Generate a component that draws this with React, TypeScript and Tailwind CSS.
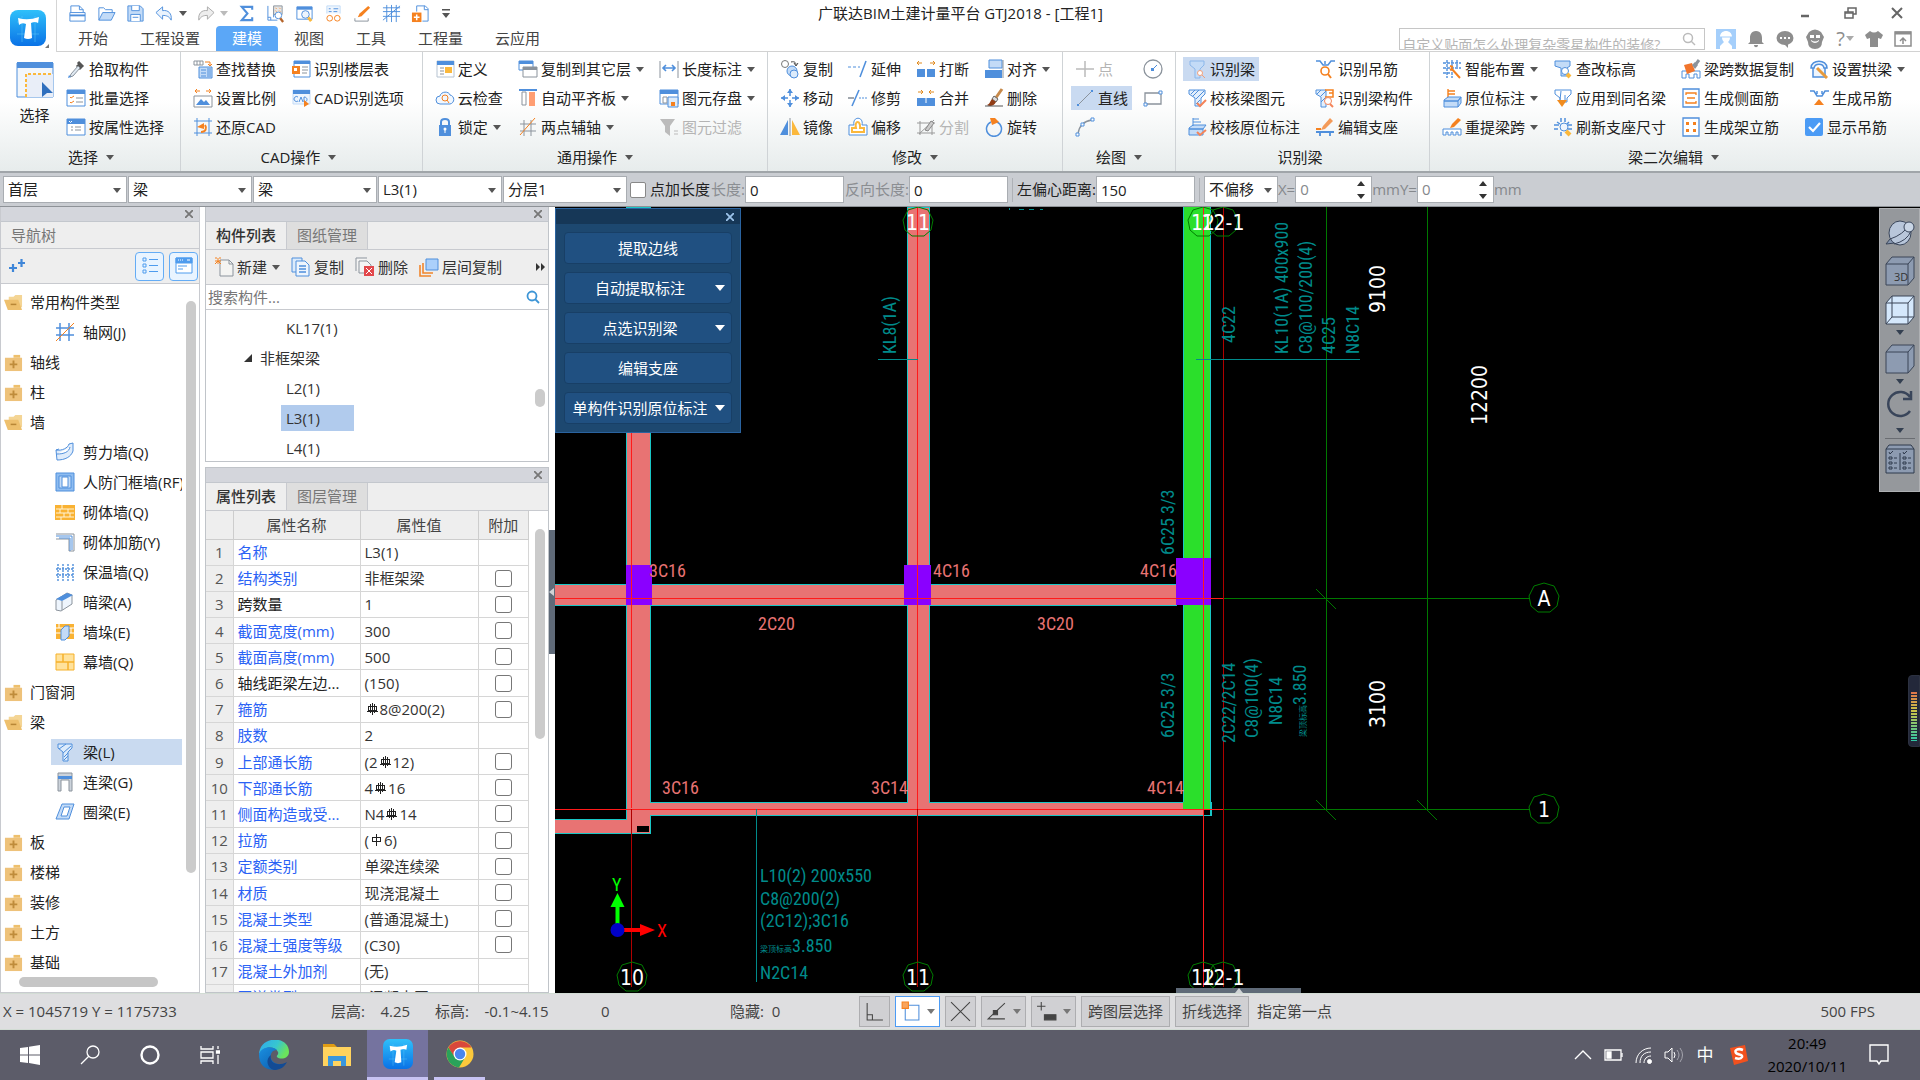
import type { ReactNode } from "react";

const B = "#4f8fdc";
const L = "#c3dbf7";
const O = "#f5811f";
const G = "#8b939c";
const Y = "#fbb83c";

const icons: Record<string, ReactNode> = {
  newFile: <><path d="M3 9V2h9l4 4v3M12 2v4h4" stroke={B} /><path d="M2 9h16v9H2z" fill="#fff" stroke={B} /><path d="M2 12h16" stroke={B} strokeWidth="2" /></>,
  open: <><path d="M2 17V4h5l2 2h7v3" stroke={B} /><path d="M2 17 6 9h13l-4 8z" fill={L} stroke={B} /></>,
  save: <><path d="M2 2h13l3 3v13H2z" fill={L} stroke={B} /><path d="M6 2v5h8V2M5 18v-7h10v7M7 14h6" fill="#fff" stroke={B} /></>,
  undo: <path d="M1 9 8 3v4c6-1 10 3 9 10-2-4-5-5-9-5v4z" fill="#eaf3fd" stroke={B} />,
  redo: <path d="M19 9 12 3v4C6 6 2 10 3 17c2-4 5-5 9-5v4z" fill="#eee" stroke="#aaa" />,
  sum: <path d="M16 6V3H5l6 7-6 7h11v-3" stroke={B} strokeWidth="2.2" />,
  report: <><path d="M2 2v15h10M2 14h3v3M8 14V5M12 12V3" stroke={B} /><path d="M8 2h9v9H8z" fill="#e6e6e6" stroke={G} /><path d="m10 4 1 1m3-1 1 1m-5 2 1 1m3-1 1 1" stroke={O} /><circle cx="13" cy="12" r="3.5" fill="#fff" stroke={B} /><path d="m15 15 3 4" stroke="#b5652b" strokeWidth="2.4" /></>,
  viewSearch: <><path d="M2 3h16v13H2z" fill="#fff" stroke={B} /><path d="M2 3h16v3H2z" fill={B} /><circle cx="11" cy="11" r="4" fill="#eef5fd" stroke={B} /><path d="m14 14 3 4" stroke={Y} strokeWidth="3" /></>,
  glasses: <><path d="M3 10V2h14v8" fill="#eef5fd" stroke={L} /><path d="M5 5h2m3 0h5M5 8h3m2 0h4" stroke={B} /><circle cx="6" cy="15" r="3" stroke={O} /><circle cx="14" cy="15" r="3" stroke={O} /></>,
  pencil: <><path d="m16 2 2 2-9 9-4 1 2-4z" fill={O} /><path d="M2 15v3h14v-3" stroke={G} /></>,
  grid: <path d="M1 4h18M1 8h18M1 13h18M5 1v18M10 1v18M15 1v18M1 17 19 2" stroke={B} />,
  addPage: <><path d="M6 8V2h9l3 3v13h-6M14 2v4h4" stroke={B} /><path d="M1 9h10v10H1z" fill={O} /><path d="M3 14h6M6 11v6" stroke="#fff" strokeWidth="1.6" /></>,
  dropper: <><path d="m12 3 5 5M11 6l4 4" stroke="#555" strokeWidth="3" /><path d="m12 7-7 8-1 3 3-1 7-8z" fill="#dfe9f2" stroke={G} /><path d="m3 16 2 2-3 1z" fill={B} /></>,
  batch: <><path d="M1 2h18v16H1z" fill="#fff" stroke={B} /><path d="M1 2h18v4H1z" fill={B} /><path d="m4 9 1 1 3-2m-4 6 1 1 3-2" stroke={O} /><path d="M10 10h7m-7 4h7" stroke={G} /></>,
  byAttr: <><path d="M1 2h18v16H1z" fill="#fff" stroke={B} /><path d="M1 2h18v5H1z" fill={B} /><path d="m3 4 1.500 1.500L6 4" stroke="#fff" /><path d="M5 10h2m2 0h6M5 13h2m2 0h6" stroke={G} /></>,
  replace: <><path d="M1 2h9v4H1zM4 2v4M7 2v4" stroke={G} /><path d="M12 3h5v4m-2-2 2 2 2-2" stroke={O} /><path d="M6 8h13v11H6z" fill={L} stroke={B} /><path d="M8 11h5m-5 3h5m-5 3h5M15 9v9M17 9v9" stroke={B} /></>,
  scale: <><path d="M2 3h5M4 1 2 3l2 2M18 3h-5m3-2 2 2-2 2" stroke={O} /><path d="M1 8h18v11H1z" fill="#fff" stroke={G} /><path d="m3 17 5-6 3 3 2-2 4 5z" fill={B} /></>,
  restore: <><path d="M4 1v18M16 1v18M1 4h18M1 16h18" stroke={B} /><path d="M8 15c5 0 6-4 4-7" stroke={O} strokeWidth="2" /><path d="M4 10l7-4 0 6z" fill={O} /></>,
  floorTable: <><path d="M3 2h16v16H3z" fill="#fff" stroke={B} /><path d="M3 2h16v3H3z" fill={B} /><path d="M1 7h8v8H1z" fill={O} /><path d="M3 9h3v3H3z" fill="#fff" /><path d="M11 8h6m-6 3h6m-6 3h5" stroke={G} /></>,
  cadOpt: <><path d="M2 2h17v14H2z" fill="#eef5fd" stroke={L} /><path d="M2 2h17v4H2z" fill={B} /><path d="M7 9a2.500 2.500 0 1 0 0 4M8 14l2-5 2 5M13 9v5c4 0 4-5 0-5" stroke={B} /><path d="m13 12 5 4-5 3z" fill={O} /></>,
  define: <><path d="M2 2h17v16H2z" fill="#fff" stroke="#b6c3d1" /><path d="M2 2h17v4H2z" fill={B} /><path d="M5 9h4m-4 3h4m-4 3h4" stroke={G} /><path d="M10 8h7v6h-7z" fill={Y} /></>,
  cloud: <><path d="M5 16a4 4 0 0 1 0-8c1-5 9-5 10-1 5 1 5 8 0 9z" fill="#f1f7fe" stroke={B} /><circle cx="10" cy="10" r="3" stroke={O} /><path d="m12 12 2 3" stroke={O} /></>,
  lock: <><path d="M6 9V5c0-4 8-4 8 0v4" stroke={B} strokeWidth="2" /><path d="M4 8h12v11H4z" fill={B} /><circle cx="10" cy="12" r="1.500" fill="#fff" /><path d="M10 12v4" stroke="#fff" /></>,
  copyFloor: <><path d="M1 2h14v9H1z" fill="#fff" stroke={B} /><path d="M1 2h14v3H1z" fill={B} /><path d="M5 8h14v10H5z" fill="#fff" stroke={G} /><path d="M5 8h14v3H5z" fill={G} /></>,
  align: <><path d="M1 2h18" stroke={B} strokeWidth="2" /><path d="M4 4h4v13H4z" fill="#fff" stroke={G} /><path d="M11 4h6v14h-6z" fill="#ff9e73" /></>,
  axis2: <><path d="M2 7h16M2 14h16M6 3v16M13 3v16" stroke={G} /><path d="M2 18 17 1" stroke={O} /></>,
  dim: <><path d="M1 2v17M19 2v17" stroke={G} /><path d="M4 9h12M7 6 4 9l3 3M13 6l3 3-3 3" stroke={B} strokeWidth="1.600" /></>,
  saveEl: <><path d="M1 2h18v14H1z" fill="#fff" stroke={B} /><path d="M1 2h18v4H1z" fill={B} /><path d="M4 9h4v6H4z" stroke={G} /><path d="M9 9h10v10H9z" fill="#dcebfb" stroke={B} /><path d="M12 14h4v4h-4z" fill={O} /></>,
  filter: <><path d="M1 2h15l-5 7v10l-5-4V9z" fill="#bbb" /><path d="M15 14h4m-4 3h4" stroke="#bbb" /></>,
  copy: <><circle cx="5" cy="5" r="3.500" stroke="#777" /><path d="M11 3c4-1 5 1 5 3m-2-2 2 3 2-3" stroke="#444" /><circle cx="12" cy="12" r="5" fill={L} stroke={B} /><circle cx="14" cy="15" r="4" fill="#dcebfb" stroke={B} /></>,
  move: <><path d="M10 1v18M1 10h18" stroke={B} strokeWidth="1.500" /><path d="m7 5 3-4 3 4zM7 15l3 4 3-4zM5 7l-4 3 4 3zM15 7l4 3-4 3z" fill={B} /><path d="M8 8h4v4H8z" fill="#fff" /></>,
  mirror: <><path d="M8 3v15H0z" fill={B} /><path d="M12 3v15h8z" fill={Y} /><path d="M10 1v18" stroke={G} /></>,
  extend: <><path d="M0 8h3m2 0h3m2 0h2" stroke={B} /><path d="m18 2-6 16" stroke={B} strokeWidth="1.600" /></>,
  trim: <><path d="M0 10h6" stroke={G} strokeWidth="1.600" /><path d="M11 2 4 18" stroke={B} strokeWidth="1.600" /><path d="M11 10h2m1 0h2m1 0h2" stroke={B} /></>,
  offset: <><path d="M6 8c-2-9 10-9 8 0h5v10H1V8z" fill="#fff" stroke={B} /><path d="M8 11c-2-8 5-8 4 0h4v4H4v-4z" fill="#fff" stroke={Y} strokeWidth="2" /></>,
  breakIt: <><path d="M1 10h8v8H1zM11 10h8v8h-8z" fill={B} /><path d="M1 4h5M3 2 1 4l2 2M19 4h-5m3-2 2 2-2 2" stroke="#e08a1e" /></>,
  merge: <><path d="M1 10h18v8H1z" fill={B} /><path d="M10 10v5" stroke="#fff" /><path d="M2 4h5M5 2l2 2-2 2M18 4h-5m2-2-2 2 2 2" stroke="#e08a1e" /></>,
  split: <><path d="M1 6h18M1 16h18M4 4v14M16 4v14M3 17 18 3" stroke="#999" /><path d="m9 13 6-9 3 2-6 8z" fill="#ccc" stroke="#888" /></>,
  justify: <><path d="M5 1h13v8H5z" fill={L} stroke={B} /><path d="M1 11h17v8H1z" fill={B} /><path d="M19 1v18" stroke={G} /></>,
  erase: <><path d="m18 1-7 10" stroke="#c78a4b" strokeWidth="3" /><path d="m10 8 4 3-2 3-4-3z" fill="#ddd" stroke="#666" /><path d="m8 11 4 3c-2 4-6 5-9 3 3-1 3-4 5-6z" fill="#913d16" /><path d="M1 18h18" stroke="#555" /></>,
  rotate: <><path d="M7 5a7.500 7.500 0 1 0 6 0" stroke={B} strokeWidth="1.500" /><path d="M6 1h5l4 4-7 3z" fill={O} /></>,
  point: <path d="M1 10h18M10 2v16" stroke="#bbb" strokeWidth="1.500" />,
  circle: <><circle cx="10" cy="10" r="9" stroke={G} strokeWidth="1.300" /><path d="m10 10 4-4" stroke={B} /><path d="M8 9h3v3H8z" fill={B} /></>,
  line: <><path d="M3 17 17 3" stroke={G} /><path d="M2 16h2v2H2zM16 2h2v2h-2z" fill={B} /></>,
  rect: <><path d="M2 5h16v11H2z" stroke={G} strokeWidth="1.300" /><path d="M16 3h3v3h-3zM1 15h3v3H1z" fill="#fff" stroke={B} /></>,
  arc: <><path d="M3 17C4 9 9 4 17 3" stroke={G} strokeWidth="1.300" /><path d="M1 16h3v3H1zM16 1h3v3h-3zM6 6h3v3H6z" fill="#fff" stroke={B} /></>,
  beamR: <><path d="M3 2h14v4l-4 4v9H8v-9L3 6z" fill={L} stroke="#8bb7ea" /><circle cx="13" cy="14" r="2.500" fill="#fff" stroke="#f3a07a" /><path d="m15 16 3 3" stroke="#f3a07a" /></>,
  beamCheck: <><path d="M2 2h16v4l-4 4v8H8v-8L2 6z" fill="#e3effc" stroke={B} /><path d="m4 6 4-4m-2 6 6-6m-3 9 8-8m-8 13 4-4" stroke={B} /><path d="m10 15 3 3 6-6" stroke="#f4845a" strokeWidth="2" /></>,
  markCheck: <><path d="M6 1v8M6 2h6M6 5h8M2 11l4-3h13l-3 4H2zM2 12h14v6H2z" fill={L} stroke={B} /><path d="m10 15 3 3 6-5" stroke="#f4845a" strokeWidth="2" /></>,
  hangR: <><path d="M1 2h4l3 4h5l3-4h4M10 2v3" stroke={B} strokeWidth="1.500" /><circle cx="10" cy="12" r="4" stroke={O} strokeWidth="1.600" /><path d="m13 15 3 4" stroke={O} strokeWidth="2" /></>,
  beamComp: <><path d="M1 2h10v17H6V9L1 6z" fill="#e3effc" stroke={B} /><path d="m2 6 4-4m0 6 5-5m-5 11 4-4" stroke={B} /><path d="M10 2h8v7h-8M18 5h-4" stroke={O} strokeWidth="1.500" /><circle cx="13" cy="13" r="3.500" fill="#fff" stroke="#f4845a" /><path d="m15 16 3 3" stroke="#f4845a" strokeWidth="2" /></>,
  editSeat: <><path d="m15 1 3 3-8 8-4 1 2-4z" fill="#f39a58" /><path d="M1 12h5" stroke={O} strokeWidth="2" /><path d="M1 15h18M5 15v4M15 15v4" stroke={B} strokeWidth="1.800" /></>,
  smart: <><path d="M1 4h18M1 9h18M1 14h8M5 1v18M10 1v18M15 1v8" stroke={B} strokeWidth="1.400" strokeDasharray="3 1" /><path d="m9 9 9 10M8 7l3 1m-3 3 2-1" stroke={O} strokeWidth="2" /></>,
  mark: <><path d="M6 1v9M6 3h7M6 6h7" stroke={O} strokeWidth="1.400" /><path d="M2 12l4-3h13l-3 4H2zM2 13h14v6H2zM16 13l3-4v6l-3 4" fill={L} stroke={B} /></>,
  respan: <><path d="m16 1 3 2-7 7-4 1 2-4z" fill={O} /><path d="M1 12h18v6h-3v-3h-2v3h-3v-3H9v3H6v-3H4v3H1z" fill="#fff" stroke={B} /></>,
  level: <><path d="M2 2h15v5l-3 2v8H8V9L2 7z" fill={L} stroke={B} /><circle cx="12" cy="12" r="3.500" fill="#fff" stroke={B} /><path d="m14 15 3 3" stroke={Y} strokeWidth="4" /></>,
  apply: <><path d="M2 2h16v4l-4 4v4H7v-4L2 6z" fill="#fff" stroke={B} /><path d="m8 3-1 9M12 7v5" stroke={B} /><path d="M4 12h10l-5 7z" fill="#f08b1e" /></>,
  refreshSeat: <><path d="M8 1v4M12 1v4M1 8h5M1 12h4M15 8h4M15 12h4M8 19v-4M4 5l3 2M16 5l-2 2" stroke={B} strokeWidth="1.500" /><circle cx="11" cy="10" r="4" fill="#eef5fd" stroke={B} /><path d="m13 14 4 4" stroke={Y} strokeWidth="4" /></>,
  dataCopy: <><path d="M1 12h18v7h-3v-4h-3v4H8v-4H5v4H1z" fill="#fff" stroke={B} /><path d="m3 6 8-2 3 8-8 3z" fill="#f1752c" /><path d="m11 6 3-3 3 3-3 4z" fill={G} /><path d="m15 5 3-4" stroke={G} strokeWidth="3" /></>,
  sideBar: <><path d="M2 1h16v18H2z" fill="#fff" stroke={B} strokeWidth="1.300" /><path d="M5 7V5h10v2M5 13v2h10v-2M6 10h8" stroke={O} strokeWidth="1.300" /></>,
  standBar: <><path d="M2 1h16v18H2z" fill="#fff" stroke={B} strokeWidth="1.300" /><path d="M5 5h3v3H5zM12 5h3v3h-3zM5 12h3v3H5zM12 12h3v3h-3z" fill={O} /></>,
  arch: <><path d="M2 9c0-9 16-9 16 0h-3c-1-5-9-5-10 0zM4 9v9h12V9" fill="#eef5fd" stroke={B} strokeWidth="1.500" /><path d="m8 9 8 8 2 2" stroke="#e79a3c" strokeWidth="3" /></>,
  hangG: <><path d="M1 3h4l3 5h5l3-5h4M8 3v3M13 3v3" stroke={B} strokeWidth="1.500" /><path d="m10 11 5 6H5z" fill={O} /></>,
  axisNet: <><path d="M1 6h18M1 13h18M5 1v18M14 1v18" stroke={B} strokeWidth="1.500" /><path d="M1 19 19 1" stroke={O} /></>,
  shear: <path d="M1 8c6 1 12-2 13-6l4-1v8c-2 6-8 9-16 9zM1 8l3-1M2 12c7 0 12-2 13-7" fill="#dfecfb" stroke={B} />,
  frame: <><path d="M1 1h18v18H1z" fill="#8ebcf0" stroke={B} /><path d="M4 4h12v12H4z" fill={L} stroke={B} /><path d="M7 5h6v10H7z" fill="#fff" stroke={B} /></>,
  brick: <><path d="M0 3h20v15H0z" fill="#f9b233" /><path d="M1 7h18M1 11h18M1 15h18M7 3v4M13 7v4M5 7v4M9 11v4M15 11v4M6 15v3" stroke="#fff3d6" /></>,
  rebar: <><path d="M1 2h18v17h-5V7H1" stroke={G} /><path d="M1 4h16v14M4 6h11v13" stroke={B} /></>,
  insul: <path d="M3 2v17M8 2v17M13 2v17M18 2v17M1 7h18M1 13h18" stroke={B} strokeDasharray="2 1" strokeWidth="1.400" />,
  hidden: <><path d="M1 8v10l5 1 11-7V3L12 1z" fill="#eef5fd" stroke={G} /><path d="M1 7 12 1l6 2-11 6z" fill={B} /><path d="M7 9v9" stroke={G} /></>,
  pier: <><path d="M1 2h18v15H1z" fill="#f9b233" /><path d="M1 6h18M1 11h18M4 2v4M16 6v5" stroke="#fff" /><path d="m6 8 4-4h4v10l-4 4H6z" fill={L} stroke={B} /></>,
  curtain: <><path d="M1 2h18v16H1z" fill="#ffe29c" stroke="#f6b12b" /><path d="M1 10h18M8 2v8M13 10v8" stroke="#f6b12b" strokeWidth="1.500" /></>,
  beam: <><path d="M3 2h14v4l-4 4v9H8v-9L3 6z" fill="#dcebfb" stroke={B} /><path d="m4 7 7-5m-3 9 8-7m-7 11 4-4m-4 7 4-4" stroke={B} /></>,
  link: <><path d="M3 1h14v18h-3V8H6v11H3z" fill="#ccd3db" stroke={G} /><path d="M3 4h14v3H3z" fill={B} /></>,
  ring: <path d="M7 2h12l-5 15H1zM9 5 6 14h6l3-9z" fill={L} stroke={B} />,
  folderOpen: <><path d="M5 4h5l2-2h7v13H5z" fill="#f4d595" /><path d="M0 7h15l4 11H4z" fill="#eec06d" /><path d="M7 12h6" stroke="#b98736" strokeWidth="1.600" /></>,
  folder: <><path d="M10 2h7v3h-7z" fill="#eec06d" /><path d="M1 5h18v14H1z" fill="#eec27a" /><path d="M6 12h8M10 8v8" stroke="#bf8c3b" strokeWidth="2" /></>,
  create: <><path d="M6 3h9l4 4v12H6z" fill="#f4f4f2" stroke={G} /><path d="M15 3v4h4" stroke={G} /><path d="M1 1h2m2 0h2M4 4l3 3M1 7l3-3M4 1v6M1 4h6" stroke={O} /></>,
  copyDoc: <><path d="M1 1h10v14H1z" fill="#dcebfb" stroke={B} /><path d="M5 4h9l4 4v11H5z" fill="#eef5fd" stroke={B} /><path d="M8 9h7M8 12h7M8 15h7" stroke={B} strokeWidth="1.500" /></>,
  delDoc: <><path d="M1 14V1h11M4 4h8l4 4v8H4z" fill="#f4f4f4" stroke={G} /><path d="M9 9h10v10H9z" fill="#e2474b" /><path d="m11 11 6 6m0-6-6 6" stroke="#fff" /></>,
  layerCopy: <><path d="M1 8v11h11M4 6v10h10" stroke="#f0862d" strokeWidth="1.600" /><path d="M7 2h12v11H7z" fill="#abd0fb" stroke={B} /></>,
};

const Icon = ({ name, className = "size-5" }: { name: string; className?: string }) => (
  <svg viewBox="0 0 20 20" className={`${className} shrink-0`} fill="none" aria-hidden="true">{icons[name]}</svg>
);

const Caret = ({ className = "text-[#555]" }: { className?: string }) => (
  <svg viewBox="0 0 8 5" className={`w-2 h-[5px] shrink-0 ${className}`} aria-hidden="true"><path d="M0 0h8L4 5z" fill="currentColor" /></svg>
);

type Tool = { icon: string; text?: string; arrow?: boolean; on?: boolean; off?: boolean };

function ToolButton({ icon, text, arrow, on, off }: Tool) {
  return (
    <button
      disabled={off}
      aria-label={text ?? icon}
      className={`flex h-6 items-center gap-[3px] px-1 whitespace-nowrap ${on ? "bg-[#c9daf1]" : ""} ${off ? "text-[#b4b4b4]" : ""}`}
    >
      <Icon name={icon} />
      {text}
      {arrow && <Caret className="ml-0.5 text-[#555]" />}
    </button>
  );
}

function Group({ label, cols, arrow = true, lead, className = "px-2" }: {
  label: string; cols: Tool[][]; arrow?: boolean; lead?: ReactNode; className?: string;
}) {
  return (
    <section className={`flex flex-col border-r border-[#cfd3d6] ${className}`}>
      <div className="flex gap-[7px] pt-[5px]">
        {lead}
        {cols.map((col, i) => (
          <div key={i} className="flex flex-col items-start gap-[5px]">
            {col.map((t) => <ToolButton key={t.icon} {...t} />)}
          </div>
        ))}
      </div>
      <div className="flex flex-1 items-center justify-center gap-2 pt-1">
        {label}
        {arrow && <Caret />}
      </div>
    </section>
  );
}

function Combo({ label, value, className = "w-[124px]" }: { label: string; value: string; className?: string }) {
  return (
    <div className={`relative ${className}`}>
      <select aria-label={label} className="h-[27px] w-full appearance-none border border-[#a9adb2] bg-white px-1 text-[15px] outline-none">
        <option>{value}</option>
      </select>
      <Caret className="pointer-events-none absolute top-3 right-1.5 text-[#555]" />
    </div>
  );
}

const quick = ["newFile", "open", "save", "undo", "redo", "sum", "report", "viewSearch", "glasses", "pencil", "grid", "addPage"];
const menus = ["开始", "工程设置", "建模", "视图", "工具", "工程量", "云应用"];

function Logo({ className }: { className: string }) {
  return (
    <svg viewBox="0 0 36 36" className={className} aria-hidden="true">
      <defs><linearGradient id="lg" x2="0" y2="1"><stop stopColor="#2fc0fa" /><stop offset="1" stopColor="#0a72e6" /></linearGradient></defs>
      <rect width="36" height="36" rx="8" fill="url(#lg)" />
      <path d="M7 24h22M7 12h22M12 6v26M25 6v26" stroke="#5cc8fb" strokeWidth=".5" />
      <path d="M8 8q10 3 21-1l-1 6q-3-2-7 0l1 15q-4 2-8 0l2-14q-4-2-7 1z" fill="#fff" />
    </svg>
  );
}

function Header() {
  return (
    <header className="grid grid-cols-[57px_1fr_auto_1fr] bg-white">
      <div className="row-span-2 flex items-center justify-center border-r border-[#d5d5d5] pt-1 pl-0.5">
        <Logo className="h-9 w-9" />
        <svg viewBox="0 0 4 4" className="-ml-px size-1 self-end mb-1" fill="#777" aria-hidden="true"><path d="M4 0v4H0z" /></svg>
      </div>
      <div className="flex h-[26px] items-center gap-2.5 pl-[11px]">
        {quick.map((q) => (
          <button key={q} aria-label={q} className="flex items-center gap-[5px]">
            <Icon name={q} className="size-[19px]" />
            {q === "undo" && <Caret className="-mr-px text-[#555]" />}
            {q === "redo" && <Caret className="-mr-px text-[#bbb]" />}
          </button>
        ))}
        <svg viewBox="0 0 8 9" className="ml-0.5 h-[9px] w-2" fill="#555" aria-hidden="true"><path d="M0 0h8v1.500H0zM0 4h8L4 9z" /></svg>
      </div>
      <h1 className="h-[26px] pr-14 text-[15px] leading-[26px]">广联达BIM土建计量平台 GTJ2018 - [工程1]</h1>
      <div className="flex h-[26px] items-center justify-end gap-8 pr-4 text-[#666]">
        <button aria-label="最小化"><svg viewBox="0 0 14 14" className="size-3.5"><path d="M3 10h8" stroke="currentColor" strokeWidth="2.500" /></svg></button>
        <button aria-label="还原"><svg viewBox="0 0 14 14" className="size-3.5" fill="none" stroke="currentColor" strokeWidth="1.500"><path d="M1 6h8v6H1zM4 6V2h8v6H9" /><path d="M1 7h8" /></svg></button>
        <button aria-label="关闭"><svg viewBox="0 0 14 14" className="size-3.5" stroke="currentColor" strokeWidth="2"><path d="m2 2 10 10M12 2 2 12" /></svg></button>
      </div>
      <div className="col-span-3 flex h-[26px] items-stretch justify-between border-b border-[#d2d2d2] pl-[5px]">
        <nav className="flex">
          {menus.map((m) => (
            <button key={m} className={`px-4 text-[15px] ${m === "建模" ? "rounded-t-sm bg-[#5ba7f7] text-white" : "text-[#444]"}`}>{m}</button>
          ))}
        </nav>
        <div className="flex items-center gap-[11px] pr-2 text-[#8d8d8d]">
          <div className="flex h-[22px] w-[306px] items-center border border-[#c6c6c6] pr-2">
            <input aria-label="搜索" placeholder="自定义贴面怎么处理复杂零星构件的装修?" className="h-5 min-w-0 flex-1 overflow-hidden pt-3 pl-0.5 text-[14px] outline-none placeholder:text-[#b5b5b5]" />
            <svg viewBox="0 0 14 14" className="size-3.5" fill="none" stroke="#bbb" strokeWidth="1.500"><circle cx="6" cy="6" r="4.500" /><path d="m9 9 4 4" /></svg>
          </div>
          <svg viewBox="0 0 20 20" className="size-5"><path d="M0 0h20v20H0z" fill="#a5cffb" /><path d="M4 8c0-8 12-8 12 0h-2c0 3-1 4-2 5l4 4v3H4v-3l4-4c-1-1-2-2-2-5z" fill="#fff" /><path d="M4 8h12" stroke="#a5cffb" /></svg>
          <svg viewBox="0 0 18 18" className="size-[18px]" fill="currentColor"><path d="M9 1c5 0 6 4 6 7v4l2 2H1l2-2V8c0-3 1-7 6-7zM7 15h4c0 3-4 3-4 0z" /></svg>
          <svg viewBox="0 0 18 18" className="size-[18px]" fill="currentColor"><ellipse cx="9" cy="8" rx="8.500" ry="7" /><path d="m8 14 4 4v-5z" /><path d="M4 7h2v2H4zM8 7h2v2H8zM12 7h2v2h-2z" fill="#fff" /></svg>
          <svg viewBox="0 0 20 20" className="size-5" fill="currentColor"><path d="M4 3q6-5 12 0l3 5-2 5q0 7-7 7t-7-7L1 8z" /><path d="M5 6h4v3H5zM11 6h4v3h-4zM6 11q4 3 8 0v1q-4 4-8 0z" fill="#fff" /></svg>
          <button aria-label="帮助" className="flex items-center gap-px text-[20px] leading-5"><span>?</span><Caret className="text-[#aaa]" /></button>
          <svg viewBox="0 0 18 18" className="size-[18px]" fill="currentColor"><path d="M5 1q4 3 8 0l5 4-2 4-3-1v9H5V8L2 9 0 5z" /></svg>
          <svg viewBox="0 0 18 18" className="size-[18px]" fill="none" stroke="currentColor" strokeWidth="1.500"><path d="M1 2h16v14H1z" /><path d="M1 3h16" strokeWidth="3" /><path d="M9 14V8m-3 3 3-3 3 3" /></svg>
        </div>
      </div>
    </header>
  );
}

function Ribbon() {
  return (
    <div className="flex h-[121px] border-b-2 border-[#a0a5a9] bg-linear-to-b from-white from-40% to-[#e7ecec] text-[15px] text-[#222]">
      <Group
        label="选择"
        className="pl-3.5 pr-3"
        lead={
          <button className="flex w-[41px] flex-col items-center pt-1">
            <svg viewBox="0 0 38 38" className="size-[38px]" fill="none"><path d="M1 2h36v34H1z" fill="#f2f6fb" stroke={B} /><path d="M1 1h36v6H1z" fill={B} /><path d="M10 36V13h27v23z" fill="#e9eef8" /><path d="M10 36V13h27" stroke={Y} strokeWidth="2" strokeDasharray="3 2" /><path d="m26 21 11 11h-6l-5 4z" fill="#2f6fbe" /></svg>
            <span className="mt-1 leading-6">选择</span>
          </button>
        }
        cols={[[{ icon: "dropper", text: "拾取构件" }, { icon: "batch", text: "批量选择" }, { icon: "byAttr", text: "按属性选择" }]]}
      />
      <Group
        label="CAD操作"
        className="pl-2 pr-3.5"
        cols={[
          [{ icon: "replace", text: "查找替换" }, { icon: "scale", text: "设置比例" }, { icon: "restore", text: "还原CAD" }],
          [{ icon: "floorTable", text: "识别楼层表" }, { icon: "cadOpt", text: "CAD识别选项" }],
        ]}
      />
      <Group
        label="通用操作"
        cols={[
          [{ icon: "define", text: "定义" }, { icon: "cloud", text: "云检查" }, { icon: "lock", text: "锁定", arrow: true }],
          [{ icon: "copyFloor", text: "复制到其它层", arrow: true }, { icon: "align", text: "自动平齐板", arrow: true }, { icon: "axis2", text: "两点辅轴", arrow: true }],
          [{ icon: "dim", text: "长度标注", arrow: true }, { icon: "saveEl", text: "图元存盘", arrow: true }, { icon: "filter", text: "图元过滤", off: true }],
        ]}
      />
      <Group
        label="修改"
        cols={[
          [{ icon: "copy", text: "复制" }, { icon: "move", text: "移动" }, { icon: "mirror", text: "镜像" }],
          [{ icon: "extend", text: "延伸" }, { icon: "trim", text: "修剪" }, { icon: "offset", text: "偏移" }],
          [{ icon: "breakIt", text: "打断" }, { icon: "merge", text: "合并" }, { icon: "split", text: "分割", off: true }],
          [{ icon: "justify", text: "对齐", arrow: true }, { icon: "erase", text: "删除" }, { icon: "rotate", text: "旋转" }],
        ]}
      />
      <Group
        label="绘图"
        cols={[
          [{ icon: "point", text: "点", off: true }, { icon: "line", text: "直线", on: true }, { icon: "arc" }],
          [{ icon: "circle" }, { icon: "rect" }],
        ]}
      />
      <Group
        label="识别梁"
        arrow={false}
        className="pl-[7px] pr-3"
        cols={[
          [{ icon: "beamR", text: "识别梁", on: true }, { icon: "beamCheck", text: "校核梁图元" }, { icon: "markCheck", text: "校核原位标注" }],
          [{ icon: "hangR", text: "识别吊筋" }, { icon: "beamComp", text: "识别梁构件" }, { icon: "editSeat", text: "编辑支座" }],
        ]}
      />
      <section className="flex flex-col pl-2">
        <div className="flex gap-[7px] pt-[5px]">
          {[
            [{ icon: "smart", text: "智能布置", arrow: true }, { icon: "mark", text: "原位标注", arrow: true }, { icon: "respan", text: "重提梁跨", arrow: true }],
            [{ icon: "level", text: "查改标高" }, { icon: "apply", text: "应用到同名梁" }, { icon: "refreshSeat", text: "刷新支座尺寸" }],
            [{ icon: "dataCopy", text: "梁跨数据复制" }, { icon: "sideBar", text: "生成侧面筋" }, { icon: "standBar", text: "生成架立筋" }],
            [{ icon: "arch", text: "设置拱梁", arrow: true }, { icon: "hangG", text: "生成吊筋" }],
          ].map((col, i) => (
            <div key={i} className="flex flex-col items-start gap-[5px]">
              {col.map((t) => <ToolButton key={t.icon} {...t} />)}
              {i === 3 && (
                <label className="flex h-6 items-center gap-1 whitespace-nowrap">
                  <span className="relative size-[18px]">
                    <input type="checkbox" defaultChecked className="block size-[18px] appearance-none rounded-xs bg-[#4b9bf5]" />
                    <svg viewBox="0 0 18 18" className="pointer-events-none absolute inset-0" fill="none"><path d="m4 9 4 4 7-8" stroke="#fff" strokeWidth="2.200" /></svg>
                  </span>
                  显示吊筋
                </label>
              )}
            </div>
          ))}
        </div>
        <div className="flex flex-1 items-center justify-center gap-2 pt-1">梁二次编辑<Caret /></div>
      </section>
    </div>
  );
}

function NumberField({ label, value }: { label: string; value: string }) {
  return (
    <label className="flex items-center whitespace-nowrap">
      {label}
      <input defaultValue={value} className="h-[27px] w-[99px] border border-[#a9adb2] bg-white px-1 text-[#222] outline-none" />
    </label>
  );
}

function Spin({ label }: { label: string }) {
  return (
    <label className="flex items-center">
      {label}
      <span className="flex h-[27px] w-[77px] items-center border border-[#a9adb2] bg-white pr-1.5">
        <input defaultValue="0" className="min-w-0 flex-1 px-1 outline-none" />
        <svg viewBox="0 0 8 18" className="h-[18px] w-2" fill="#333"><path d="M0 5h8L4 0zM0 13h8l-4 5z" /></svg>
      </span>
      mm
    </label>
  );
}

function OptionsBar() {
  return (
    <div className="flex h-[34px] items-center border-b border-[#8e9297] bg-[#cacdd2] pl-[3px] text-[15px]">
      <div className="flex gap-px">
        <Combo label="楼层" value="首层" />
        <Combo label="构件大类" value="梁" />
        <Combo label="构件类型" value="梁" />
        <Combo label="构件" value="L3(1)" />
        <Combo label="分层" value="分层1" />
      </div>
      <label className="flex items-center gap-1 pl-[3px] whitespace-nowrap">
        <input type="checkbox" className="size-4 appearance-none rounded-xs border border-[#888] bg-white" />
        点加长度
      </label>
      <div className="flex gap-px pl-px text-[#8b8e92]">
        <NumberField label="长度:" value="0" />
        <NumberField label="反向长度:" value="0" />
      </div>
      <div className="ml-1 h-6 border-l border-[#aeb1b6]" />
      <div className="flex pl-1">
        <NumberField label="左偏心距离:" value="150" />
      </div>
      <div className="mx-1 h-6 border-l border-[#aeb1b6]" />
      <Combo label="偏移方式" value="不偏移" className="w-[74px]" />
      <div className="flex text-[#85888c]">
        <Spin label="X=" />
        <Spin label="Y=" />
      </div>
    </div>
  );
}

type Node = { text: string; icon?: string; open?: boolean; on?: boolean };
const tree: Node[] = [
  { text: "常用构件类型", open: true }, { text: "轴网(J)", icon: "axisNet" }, { text: "轴线" }, { text: "柱" }, { text: "墙", open: true },
  { text: "剪力墙(Q)", icon: "shear" }, { text: "人防门框墙(RF)", icon: "frame" }, { text: "砌体墙(Q)", icon: "brick" },
  { text: "砌体加筋(Y)", icon: "rebar" }, { text: "保温墙(Q)", icon: "insul" }, { text: "暗梁(A)", icon: "hidden" },
  { text: "墙垛(E)", icon: "pier" }, { text: "幕墙(Q)", icon: "curtain" }, { text: "门窗洞" }, { text: "梁", open: true },
  { text: "梁(L)", icon: "beam", on: true }, { text: "连梁(G)", icon: "link" }, { text: "圈梁(E)", icon: "ring" },
  { text: "板" }, { text: "楼梯" }, { text: "装修" }, { text: "土方" }, { text: "基础" },
];

const CloseX = () => (
  <button aria-label="关闭" className="text-[#777]">
    <svg viewBox="0 0 8 8" className="size-2" stroke="currentColor" strokeWidth="1.800"><path d="m0 0 8 8M8 0 0 8" /></svg>
  </button>
);

const Strip = () => (
  <div className="flex h-[15px] shrink-0 items-center justify-end border-b border-[#c3c7cd] bg-[#d4d6dc] pr-1.5"><CloseX /></div>
);

function NavTree() {
  return (
    <aside className="flex w-[200px] shrink-0 flex-col border border-t-0 border-[#c8cacf] bg-white text-[15px]">
      <Strip />
      <h2 className="h-[27px] shrink-0 border-b border-[#c8cacf] bg-[#eee] pl-2.5 leading-[27px] text-[#777]">导航树</h2>
      <div className="flex h-[35px] shrink-0 items-center gap-[5px] border-b border-[#c8cacf] bg-[#eee] pr-px pl-2">
        <button aria-label="展开" className="mr-auto">
          <svg viewBox="0 0 16 14" className="w-4 h-3.5" stroke="#3f86d8" strokeWidth="2.200"><path d="M0 9h8M4 5v8M9 4h7M12.500 0v8" /></svg>
        </button>
        <button aria-label="列表" className="flex size-[29px] items-center justify-center rounded-sm border border-[#64acf5] bg-[#e9f4ff]">
          <svg viewBox="0 0 16 18" className="h-[18px] w-4" fill="none" stroke="#4f9cee"><path d="M1 1h3v3H1zM1 7h3v3H1zM1 13h3v3H1zM7 2.500h9M7 8.500h9M7 14.500h9" /></svg>
        </button>
        <button aria-label="卡片" className="flex size-[29px] items-center justify-center rounded-sm border border-[#64acf5] bg-[#e9f4ff]">
          <svg viewBox="0 0 18 18" className="size-[18px]" fill="none" stroke="#4f9cee"><path d="M1 1h16v15H1z" fill="#fff" /><path d="M1 1h16v5H1z" fill="#4f9cee" /><path d="M3 3h1m1 0h1m1 0h1m4 0h3" stroke="#fff" /><path d="M3 9h9M3 12h5" /></svg>
        </button>
      </div>
      <div className="flex min-h-0 flex-1 pt-[3px]">
        <ul className="min-w-0 flex-1 overflow-hidden">
          {tree.map((n) => n.icon ? (
            <li key={n.text} className="flex h-[30px] items-center pl-[50px]">
              <button className={`flex h-[26px] w-full items-center gap-2 overflow-hidden pl-1 whitespace-nowrap ${n.on ? "bg-[#c9daf0]" : ""}`}>
                <Icon name={n.icon} />{n.text}
              </button>
            </li>
          ) : (
            <li key={n.text} className="flex h-[30px] items-center pl-[3px]">
              <button className="flex items-center gap-[7px] whitespace-nowrap"><Icon name={n.open ? "folderOpen" : "folder"} className="size-[19px]" />{n.text}</button>
            </li>
          ))}
        </ul>
        <div className="w-[17px] pt-3.5"><div className="ml-1 h-[572px] max-h-full w-2.5 rounded-full bg-[#cbcbcb]" /></div>
      </div>
      <div className="h-4 shrink-0 pt-px pl-[18px]"><div className="h-2.5 w-[139px] rounded-full bg-[#c6c6c6]" /></div>
    </aside>
  );
}

function Tabs({ names }: { names: [string, string] }) {
  return (
    <div role="tablist" className="flex h-7 shrink-0 border-b border-[#c8cacf] bg-[#eee]">
      <button role="tab" aria-selected="true" className="px-2.5 font-medium text-[#333]">{names[0]}</button>
      <button role="tab" aria-selected="false" className="border-x border-[#c8cacf] bg-[#dedede] px-2.5 text-[#777]">{names[1]}</button>
    </div>
  );
}

// rebar grade marks: HRB has the double bar under the ring, HPB does not
const Rebar = ({ plain }: { plain?: boolean }) => (
  <svg viewBox="0 0 15 14" className="mb-1 inline h-3.5 w-[15px]" fill="none" stroke="#222" shapeRendering="crispEdges"><path d="M7.500 1v12M3.500 4.500h8v4h-8z" />{!plain && <path d="M5.500 2v9M9.500 2v9M2 9.500h11" />}</svg>
);

const props: [string, ReactNode, boolean, boolean][] = [
  ["名称", "L3(1)", true, false], ["结构类别", "非框架梁", true, true], ["跨数量", "1", false, true],
  ["截面宽度(mm)", "300", true, true], ["截面高度(mm)", "500", true, true], ["轴线距梁左边...", "(150)", false, true],
  ["箍筋", <><Rebar />8@200(2)</>, true, true], ["肢数", "2", true, false], ["上部通长筋", <>(2<Rebar />12)</>, true, true],
  ["下部通长筋", <>4<Rebar />16</>, true, true], ["侧面构造或受...", <>N4<Rebar />14</>, true, true], ["拉筋", <>(<Rebar plain />6)</>, true, true],
  ["定额类别", "单梁连续梁", true, true], ["材质", "现浇混凝土", true, true], ["混凝土类型", "(普通混凝土)", true, true],
  ["混凝土强度等级", "(C30)", true, true], ["混凝土外加剂", "(无)", true, false], ["泵送类型", "(混凝土泵)", true, false],
];

function Panels() {
  return (
    <div className="flex w-[344px] shrink-0 flex-col text-[15px]">
      <section className="flex h-[255px] shrink-0 flex-col border border-t-0 border-[#c0c4c9] bg-white">
        <Strip />
        <Tabs names={["构件列表", "图纸管理"]} />
        <div className="flex h-[35px] shrink-0 items-center gap-[11px] border-b border-[#c8cacf] bg-[#eee] pr-0.5 pl-2 text-[#333]">
          <button className="flex items-center gap-[3px]"><Icon name="create" />新建<Caret className="ml-0.5 text-[#555]" /></button>
          <button className="flex items-center gap-[3px]"><Icon name="copyDoc" />复制</button>
          <button className="flex items-center gap-[3px]"><Icon name="delDoc" />删除</button>
          <button className="flex items-center gap-[3px]"><Icon name="layerCopy" />层间复制</button>
          <button aria-label="更多" className="ml-auto"><svg viewBox="0 0 10 8" className="h-2 w-2.5" fill="#333"><path d="M0 0l4 4-4 4zM5 0l4 4-4 4z" /></svg></button>
        </div>
        <div className="flex h-[25px] shrink-0 items-center border-b border-[#c8cacf] pr-2">
          <input aria-label="搜索构件" placeholder="搜索构件..." className="min-w-0 flex-1 px-0.5 outline-none placeholder:text-[#777]" />
          <svg viewBox="0 0 14 14" className="size-3.5" fill="none" stroke="#3d95d6" strokeWidth="1.800"><circle cx="6" cy="6" r="4.500" /><path d="m9 9 4 4" /></svg>
        </div>
        <div className="flex min-h-0 flex-1 overflow-hidden pt-[3px] pl-[38px]">
          <ul className="flex-1 leading-[30px] text-[#333]">
            <li className="pl-[42px]">KL17(1)</li>
            <li className="flex items-center gap-2"><svg viewBox="0 0 8 8" className="size-2" fill="#333"><path d="M8 0v8H0z" /></svg>非框架梁</li>
            <li className="pl-[42px]">L2(1)</li>
            <li className="flex h-[30px] items-center pl-[37px]"><span className="h-[26px] w-[73px] bg-[#b1cbed] pl-[5px] leading-[26px]">L3(1)</span></li>
            <li className="pl-[42px]">L4(1)</li>
          </ul>
          <div className="mt-[76px] mr-[3px] h-[18px] w-2.5 rounded-full bg-[#cbcbcb]" />
        </div>
      </section>
      <section className="mt-[5px] flex min-h-0 flex-1 flex-col border border-[#c0c4c9] bg-white">
        <Strip />
        <Tabs names={["属性列表", "图层管理"]} />
        <div className="flex min-h-0 flex-1 overflow-hidden">
          <table className="h-[500px] w-[323px] shrink-0 table-fixed border-collapse text-left whitespace-nowrap">
            <thead className="bg-[#eee] text-[#444]">
              <tr className="h-7 *:border-r *:border-b *:border-[#cdcdcd] *:font-normal">
                <th className="w-[27px]" /><th className="w-[127px] text-center">属性名称</th><th className="w-[118px] text-center">属性值</th><th className="text-center">附加</th>
              </tr>
            </thead>
            <tbody>
              {props.map(([name, value, blue, check], i) => (
                <tr key={name} className="leading-6 *:border-r *:border-b *:border-[#d6d6d6]">
                  <td className="bg-[#eee] text-center text-[#555]">{i + 1}</td>
                  <td className={`pl-1 ${blue ? "text-[#2a62f5]" : "text-[#222]"}`}>{name}</td>
                  <td className="pl-1 text-[#333]">{value}</td>
                  <td>{check && <input type="checkbox" aria-label={name} className="mx-auto block size-[17px] appearance-none rounded-[3px] border border-[#777] bg-white" />}</td>
                </tr>
              ))}
            </tbody>
          </table>
          <div className="ml-[6px] w-2.5 pt-[18px]"><div className="h-[210px] rounded-full bg-[#cbcbcb]" /></div>
        </div>
      </section>
    </div>
  );
}

const steps = [
  { text: "提取边线" }, { text: "自动提取标注", arrow: true }, { text: "点选识别梁", arrow: true }, { text: "编辑支座" }, { text: "单构件识别原位标注", arrow: true },
];

const note = "font-['Liberation_Sans_Narrow','Roboto_Condensed','DejaVu_Sans_Condensed','Noto_Sans_CJK_SC',sans-serif] text-[18px]";
const axisFont = "font-['DejaVu_Sans_Condensed','DejaVu_Sans',sans-serif] text-[21px]";

// up = true draws the note rotated, reading upwards
const notes: [number, number, string, boolean?][] = [
  [896, 354, "KL8(1A)", true], [1174, 555, "6C25 3/3", true], [1235, 343, "4C22", true], [1288, 354, "KL10(1A) 400x900", true],
  [1312, 354, "C8@100/200(4)", true], [1335, 354, "4C25", true], [1359, 354, "N8C14", true], [1174, 738, "6C25 3/3", true],
  [1235, 743, "2C22/2C14", true], [1258, 738, "C8@100(4)", true], [1282, 725, "N8C14", true],
  [760, 882, "L10(2) 200x550"], [760, 905, "C8@200(2)"], [760, 927, "(2C12);3C16"], [760, 979, "N2C14"],
];
const marks: [number, number, string][] = [
  [649, 577, "3C16"], [933, 577, "4C16"], [1140, 577, "4C16"], [758, 630, "2C20"], [1037, 630, "3C20"],
  [662, 794, "3C16"], [871, 794, "3C14"], [1147, 794, "4C14"],
];
const bubbles: [number, number, string][] = [
  [918, 222, "11"], [1203, 222, "12"], [1223, 222, "12-1"], [632, 977, "10"], [918, 977, "11"], [1203, 977, "12"], [1223, 977, "12-1"],
  [1544, 598, "A"], [1544, 809, "1"],
];
const dims: [number, number, string][] = [[1385, 313, "9100"], [1487, 425, "12200"], [1385, 728, "3100"]];

function Drawing() {
  return (
    <svg className="block h-full w-full" fill="none" aria-label="梁平面图">
      <g transform="translate(-555 -207)" shapeRendering="crispEdges">
        <g fill="#e87373" stroke="#19c6c6">
          <path d="M626 207v612h-80v14h104V815.500h561v-13.500H929V605h247v-20.500H929V207h-22v377.500H650V207zM546 584.500h80V605h-80zM650 605h257v197H650z" fillRule="evenodd" />
        </g>
        <path d="M637 826h12v6h-12zM1204 809h6v6h-6z" fill="#000" />
        <path d="M1183 207h27v602h-27z" fill="#2bdf2b" />
        <path d="M1183.500 207v595M1210.500 207v609" stroke="#19c6c6" />
        <path d="M626 565h26v40h-26zM904 565h27v40h-27zM1176 558h35v47h-35z" fill="#8a00ff" />
        <path d="M1326 207v602M1427 207v602M1224 598h305M1224 809h305M1316 589l20 20M1316 800l20 20M1417 800l20 20" stroke="#007800" />
        <path d="M555 598h669M555 809h669M631.500 432v376M917.500 207v602M1203.500 207v780" stroke="#ff1a1a" />
        <path d="M631.500 809v178M917.500 809v178M1223.500 207v780" stroke="#b00000" />
        <path d="M878 359h40M1196 359h164M756.500 809v173M1009 208v2m10-1h5m5 0h5m6 0h3" stroke="#008b8b" />
      </g>
      <g transform="translate(-555 -207)">
        {bubbles.map(([x, y, t], i) => (
          <g key={i}>
            <path transform={`translate(${x} ${y})`} d="M0-15 10-12 15-2 13 8 6 14-6 14-13 8-15-2-10-12z" stroke="#007d00" />
            <text x={x} y={y + 8} textAnchor="middle" fill="#fff" className={axisFont}>{t}</text>
          </g>
        ))}
        {dims.map(([x, y, t]) => <text key={t} transform={`translate(${x} ${y}) rotate(-90)`} fill="#fff" className={axisFont}>{t}</text>)}
        {notes.map(([x, y, t, up], i) => (
          <text key={i} transform={`translate(${x} ${y})${up ? " rotate(-90)" : ""}`} fill="#008b8b" className={note}>{t}</text>
        ))}
        {marks.map(([x, y, t], i) => <text key={i} x={x} y={y} fill="#e87373" className={note}>{t}</text>)}
        <text transform="translate(1306 737) rotate(-90)" fill="#008b8b" className={note}><tspan className="text-[8px]">梁顶标高</tspan>3.850</text>
        <text x="760" y="952" fill="#008b8b" className={note}><tspan className="text-[8px]">梁顶标高</tspan>3.850</text>
        <path d="M617.500 906v24" stroke="#0f0" strokeWidth="4" /><path d="m617.500 893 7 14h-14z" fill="#0f0" />
        <path d="M617 930h24" stroke="#f00" strokeWidth="4" /><path d="m655 930-15-6v12z" fill="#f00" />
        <circle cx="617.500" cy="930" r="7" fill="#0000c8" />
        <text x="612" y="891" fill="#0f0" className={note}>Y</text>
        <text x="657" y="937" fill="#f00" className={note}>X</text>
      </g>
    </svg>
  );
}

const Cube = ({ light, text }: { light?: boolean; text?: string }) => (
  <svg viewBox="0 0 30 30" className="size-[30px]" stroke="#3a4557" fill={light ? "#d5e8fc" : "#8d9bb1"}>
    <path d="M1 8 7 1h22v21l-6 7H1z" /><path d="M1 8h22v21M23 8l6-7" fill="none" />
    {light && <path d="M7 1v21h22M7 22l-6 7" fill="none" />}
    {text && <text x="9" y="25" fontSize="11" fill="#333" stroke="none">{text}</text>}
  </svg>
);

function Viewport() {
  return (
    <main className="relative min-w-0 flex-1 overflow-hidden bg-black">
      <Drawing />
      <div className="absolute top-px left-0 w-[186px] border border-[#2a639f] bg-[#1d4870] text-[15px] text-white">
        <div className="flex h-[15px] items-center justify-end bg-[#163757] pr-1.5"><button aria-label="关闭" className="text-[#9cc3ea]"><svg viewBox="0 0 8 8" className="size-2" stroke="currentColor" strokeWidth="1.800"><path d="m0 0 8 8M8 0 0 8" /></svg></button></div>
        <div className="flex flex-col gap-2 p-2">
          {steps.map((s) => (
            <button key={s.text} className="flex h-8 items-center justify-center rounded-sm border border-[#183f66] bg-[#205081] whitespace-nowrap">
              <span className={s.arrow ? "flex-1" : ""}>{s.text}</span>
              {s.arrow && <svg viewBox="0 0 10 6" className="mr-1.5 h-1.5 w-2.5" fill="#fff" aria-hidden="true"><path d="M0 0h10L5 6z" /></svg>}
            </button>
          ))}
        </div>
      </div>
      <div className="absolute top-px right-0 flex h-[284px] w-[41px] flex-col items-center gap-[5px] border border-[#aeb0b3] bg-[#95989c] pt-2.5">
        <svg viewBox="0 0 30 28" className="h-7 w-[30px]" fill="#8494ad" stroke="#39455a"><path d="M5 20 1 25l9-1" /><ellipse cx="15" cy="14" rx="11" ry="12" fill="#b8c6da" /><path d="M5 20Q18 16 25 5M9 25Q22 22 26 12" fill="none" /><circle cx="24" cy="8" r="5" fill="#c9d5e5" /></svg>
        <div className="my-1"><Cube text="3D" /></div>
        <Cube light />
        <Caret className="text-[#333f50]" />
        <div className="mt-1"><Cube /></div>
        <Caret className="text-[#333f50]" />
        <svg viewBox="0 0 30 30" className="size-[30px]" fill="none" stroke="#39455a" strokeWidth="2.500"><path d="M25 8a12 12 0 1 0 0 14M26 2v8h-8" /></svg>
        <Caret className="mt-1 text-[#333f50]" />
        <div className="w-[30px] border-t border-[#6a6d72]" />
        <svg viewBox="0 0 30 30" className="size-[30px]" fill="#8d9bb1" stroke="#2f3a4c"><path d="M1 5 4 1h22l3 4v24H1zM1 5h28M15 9v17" /><path d="m4 8 1 2 3-3m10 1 1 2 3-3M4 13h3v2H4zM4 18h3v2H4zM4 23h3v2H4zM18 13h3v2h-3zM18 18h3v2h-3zM18 23h3v2h-3zM9 14h3M9 19h3M9 24h3M23 14h3M23 19h3M23 24h3" fill="none" /></svg>
      </div>
      <div className="absolute top-[468px] right-0 flex h-[72px] w-3 flex-col items-center rounded-l border border-[#2c3140] bg-[#23283a] pt-[15px]">
        <svg viewBox="0 0 6 50" className="h-[50px] w-1.5" aria-hidden="true">
          <defs><linearGradient id="meter" x2="0" y2="1"><stop stopColor="#e0704a" /><stop offset=".4" stopColor="#c9c548" /><stop offset="1" stopColor="#2fc6a5" /></linearGradient></defs>
          <path d="M0 0h6v50H0z" fill="url(#meter)" />
          <path d="M3 0v50" stroke="#23283a" strokeWidth="6" strokeDasharray="1 2" />
        </svg>
      </div>
      <div className="absolute bottom-0 left-[621px] flex h-[5px] w-[125px] items-end justify-center bg-[#5f6a78]">
        <svg viewBox="0 0 8 5" className="h-[5px] w-2" fill="#d0d3d6"><path d="M0 5h8L4 0z" /></svg>
      </div>
    </main>
  );
}

const snaps: [string, ReactNode, boolean, boolean][] = [
  ["正交", <path d="M3 2v16h15M3 13h5v5" />, false, false],
  ["捕捉", <><path d="M5 4h13v14H5z" stroke={B} fill="#fff" /><path d="M2 1h6v6H2z" fill="#f9a45c" stroke={O} /></>, true, true],
  ["交点", <path d="m1 1 18 18M19 1 1 19" />, false, false],
  ["角度", <><path d="M18 2 2 17h16" /><path d="M7 9h4v4H7z" fill="#444" /></>, true, false],
  ["输入", <><path d="M1 5h8M5 1v8" /><path d="M8 13h11v5H8z" fill="#444" /></>, true, false],
];

function StatusBar() {
  return (
    <footer className="flex h-[37px] shrink-0 items-center border-t border-b border-[#d2dcd4] bg-[#dedee0] text-[15px] whitespace-nowrap text-[#444]">
      <div className="w-[331px] pl-[3px]">X = 1045719 Y = 1175733</div>
      <div className="w-[104px]">层高:&nbsp;&nbsp;&nbsp; 4.25</div>
      <div className="w-[166px]">标高:&nbsp;&nbsp;&nbsp; -0.1~4.15</div>
      <div className="w-[129px]">0</div>
      <div className="w-[129px]">隐藏:&nbsp; 0</div>
      <div className="flex gap-[5px]">
        {snaps.map(([name, art, menu, on]) => (
          <button key={name} aria-label={name} className={`flex h-[31px] items-center gap-1.5 border px-1 ${on ? "border-[#4b9bf5] bg-white" : "border-[#adadb0] bg-[#d0d0d3]"}`}>
            <svg viewBox="0 0 20 20" className="size-[21px]" fill="none" stroke="#444">{art}</svg>
            {menu && <Caret className="text-[#777]" />}
          </button>
        ))}
        <button className="h-[31px] border border-[#adadb0] bg-[#d0d0d3] px-1.5">跨图层选择</button>
        <button className="h-[31px] border border-[#adadb0] bg-[#d0d0d3] px-1.5">折线选择</button>
      </div>
      <span className="pl-2">指定第一点</span>
      <span className="ml-auto pr-[45px]">500 FPS</span>
    </footer>
  );
}

function Taskbar() {
  return (
    <div className="flex h-[50px] shrink-0 items-stretch bg-[#5c5c69]">
      {[
        <svg viewBox="0 0 20 20" className="size-5" fill="#fff"><path d="M0 3l8-1v7.500H0zM9 1.800 20 0v9.500H9zM0 10.500h8V18l-8-1zM9 10.500h11V20L9 18z" /></svg>,
        <svg viewBox="0 0 20 20" className="size-5" fill="none" stroke="#fff" strokeWidth="1.300"><circle cx="13" cy="7" r="6" /><path d="m9 11-8 8" /></svg>,
        <svg viewBox="0 0 20 20" className="size-5" fill="none" stroke="#fff" strokeWidth="2.400"><circle cx="10" cy="10" r="8.500" /></svg>,
        <svg viewBox="0 0 20 20" className="size-5" fill="none" stroke="#fff" strokeWidth="1.300"><path d="M1 1v3h12V1M1 19v-3h12v3M1 7h12v6H1zM18 1v3M18 10v9" /><path d="M16.500 6h3v2h-3z" fill="#fff" /></svg>,
      ].map((art, i) => <button key={i} aria-label={["开始", "搜索", "Cortana", "任务视图"][i]} className="flex w-[60px] items-center justify-center">{art}</button>)}
      <button aria-label="Edge" className="ml-1 flex w-[60px] items-center justify-center">
        <svg viewBox="0 0 30 30" className="size-[30px]">
          <defs>
            <linearGradient id="e1" y2=".4"><stop stopColor="#2fa8ee" /><stop offset=".6" stopColor="#37c6d0" /><stop offset="1" stopColor="#6be35c" /></linearGradient>
            <linearGradient id="e2" y1="0" x2="1" y2="1"><stop stopColor="#1a8fe0" /><stop offset="1" stopColor="#0b57a8" /></linearGradient>
          </defs>
          <path d="M0 15C0-5 30-5 30 12c0 7-9 8-12 5-1-2 2-2 1-5C16 5 3 6 0 15z" fill="url(#e1)" />
          <path d="M0 14C2 7 13 5 18 10c-5 0-7 4-6 8 1 5 8 8 15 5-7 9-18 8-23 3C1 23 0 19 0 14z" fill="url(#e2)" />
          <path d="M12 15c-2 8 7 12 16 7-3 6-8 8-13 8-7-2-9-11-3-15z" fill="#134b94" />
        </svg>
      </button>
      <button aria-label="文件资源管理器" className="ml-3 flex w-[41px] items-center justify-center">
        <svg viewBox="0 0 28 24" className="h-6 w-7"><path d="M0 1h11l3 3H0z" fill="#e09c14" /><path d="M0 4h28v19H0z" fill="#ffd35e" /><path d="M5 23V13h18v10h-5v-5h-8v5z" fill="#3a97dd" /></svg>
      </button>
      <button aria-label="GTJ2018" className="ml-2.5 flex w-[61px] items-center justify-center border-b-3 border-[#c7c3f3] bg-[#75739f]"><Logo className="size-[30px]" /></button>
      <button aria-label="Chrome" className="ml-1.5 flex w-[51px] items-center justify-center border-b-3 border-[#c7c3f3]">
        <svg viewBox="0 0 28 28" className="size-7"><circle cx="14" cy="14" r="13.500" fill="#fcc93c" /><path d="M2.500 7.500A13.500 13.500 0 0 1 25.500 7.500H14L8 17z" fill="#d9483b" /><path d="M2.300 7.500A13.500 13.500 0 0 0 13 27.500l6-10-10 0z" fill="#2aa25a" /><circle cx="14" cy="14" r="6.500" fill="#fff" /><circle cx="14" cy="14" r="5.200" fill="#4a86ee" /></svg>
      </button>
      <div className="ml-auto flex items-center gap-3 pr-[31px]">
        <svg viewBox="0 0 18 10" className="h-2.5 w-[18px]" fill="none" stroke="#fff" strokeWidth="1.400"><path d="m1 9 8-8 8 8" /></svg>
        <svg viewBox="0 0 19 12" className="h-3 w-[19px]" fill="none" stroke="#fff" strokeWidth="1.300"><path d="M1 1h16v10H1z" /><path d="M3 3h4v6H3z" fill="#fff" /><path d="M18 4v4" /></svg>
        <svg viewBox="0 0 17 17" className="size-[17px]" fill="none" stroke="#fff"><path d="M1 16C1 7 8 1 16 1M5 16C5 9 9 5 16 5M9 16c0-4 3-7 7-7" /><circle cx="14.500" cy="14.500" r="2" fill="#fff" /></svg>
        <svg viewBox="0 0 20 16" className="h-4 w-5" fill="none" stroke="#fff"><path d="M1 5h3l4-4v14l-4-4H1zM10 5q2 3 0 6" /><path d="M13 3q4 5 0 10M16 1q5 7 0 14" stroke="#a5a5ae" /></svg>
        <span className="text-[17px] text-white">中</span>
        <svg viewBox="0 0 20 20" className="ml-1 size-5"><path d="m1 3 15-3 3 16-14 4z" fill="#f2511e" /><path d="M14 5C9 3 5 5 7 8c2 2 7 1 6 4-1 2-4 2-7 1" fill="none" stroke="#fff" strokeWidth="2.600" /></svg>
        <div className="ml-1.5 text-center text-[15px] leading-[23px] text-black"><div>20:49</div><div>2020/10/11</div></div>
        <svg viewBox="0 0 20 22" className="ml-2.5 h-[22px] w-5" fill="none" stroke="#fff" strokeWidth="1.400"><path d="M1 1h18v16h-7l-2 3-2-3H1z" /></svg>
      </div>
    </div>
  );
}

export default function App() {
  return (
    <div className="flex h-screen flex-col overflow-hidden bg-white font-['Open_Sans','Noto_Sans_CJK_SC',sans-serif] text-[#222]">
      <Header />
      <Ribbon />
      <OptionsBar />
      <div className="flex min-h-0 flex-1">
        <NavTree />
        <div className="w-[5px]" />
        <Panels />
        <div className="flex w-1.5 items-center pb-4">
          <div className="flex h-[124px] w-full items-center bg-[#5f6a78]"><svg viewBox="0 0 5 8" className="h-2 w-[5px]" fill="#d0d3d6"><path d="M5 0v8L0 4z" /></svg></div>
        </div>
        <Viewport />
      </div>
      <StatusBar />
      <Taskbar />
    </div>
  );
}
